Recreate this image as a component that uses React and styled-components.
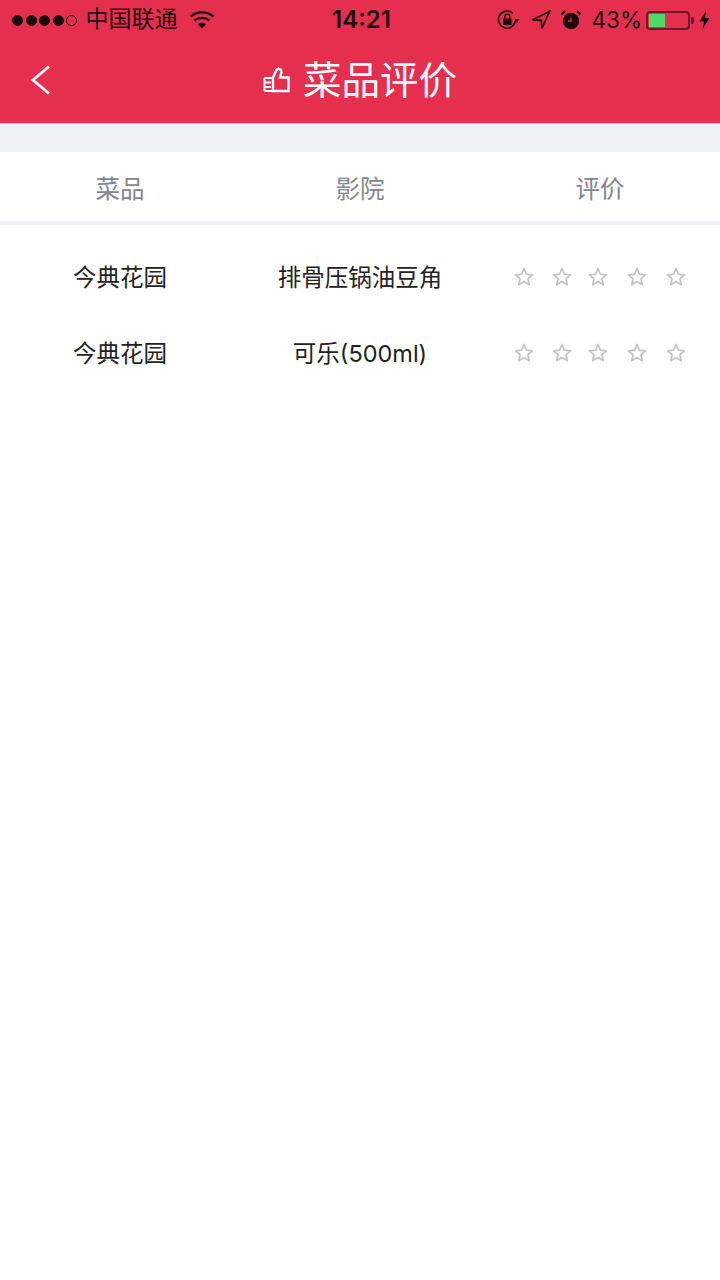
import React from "react";
import styled, { createGlobalStyle } from "styled-components";

const cjk = `"Inter", "Noto Sans CJK SC", "Noto Sans", sans-serif`;

const GlobalStyle = createGlobalStyle`
  html, body {
    margin: 0;
    padding: 0;
    background: #fff;
  }
  body {
    font-family: ${cjk};
  }
`;

const Page = styled.div`
  width: 720px;
  height: 1280px;
  overflow: hidden;
  background: #fff;
`;

const Top = styled.header`
  height: 123px;
  background: #e62f4f;
  border-bottom: 1px solid #c9c4c9;
`;

const StatusBar = styled.div`
  height: 40px;
  display: grid;
  grid-template-columns: 1fr auto 1fr;
  align-items: center;
  color: #1a0a0e;
  padding: 0 10px 0 12px;
`;

const StatusLeft = styled.div`
  display: flex;
  align-items: center;
`;

const StatusRight = styled.div`
  display: flex;
  align-items: center;
  justify-content: flex-end;
`;

const Dot = styled.span`
  width: 11px;
  height: 11px;
  margin-right: 2.5px;
  box-sizing: border-box;
  border-radius: 50%;
  border: 1px solid #1a0a0e;
  background: ${props => (props.$empty ? "transparent" : "#1a0a0e")};
`;

const Carrier = styled.span`
  margin-left: 6px;
  font-size: 23px;
  line-height: 38px;
  height: 40px;
`;

const Clock = styled.span`
  font-size: 24px;
  font-weight: 600;
  line-height: 40px;
  margin-left: 1px;
`;

const Percent = styled.span`
  font-size: 22.5px;
  line-height: 40px;
  margin: 0 4px 0 9px;
`;

const Battery = styled.span`
  width: 44px;
  height: 19px;
  box-sizing: border-box;
  border: 2px solid #6e1a2b;
  border-radius: 4px;
  padding: 1px;
  display: flex;
`;

const BatteryFill = styled.span`
  display: block;
  height: 100%;
  background: #4cd964;
`;

const BatteryCap = styled.span`
  width: 3px;
  height: 7px;
  margin-left: 1px;
  margin-right: 5px;
  background: #6e1a2b;
  border-radius: 0 2px 2px 0;
`;

const StatusIcon = styled.svg`
  display: block;
  margin-left: ${props => props.$gap || 0}px;
`;

const NavBar = styled.nav`
  height: 83px;
  position: relative;
  display: flex;
  align-items: center;
  justify-content: center;
  color: #fff;
`;

const Back = styled.svg`
  position: absolute;
  left: 30px;
  top: 25px;
`;

const Title = styled.h1`
  margin: 0 0 3px;
  display: flex;
  align-items: center;
  font-size: 38.5px;
  line-height: 50px;
  font-weight: 400;
`;

const ThumbIcon = styled.svg`
  margin-right: 13px;
`;

const Band = styled.div`
  height: 28px;
  background: #f0f1f5;
`;

const Row = styled.div`
  display: grid;
  grid-template-columns: repeat(3, 240px);
  align-items: center;
  justify-items: center;
  height: 76px;
`;

const HeadRow = styled(Row)`
  border-bottom: 4px solid #f0f1f5;
  color: #84858f;
  font-size: 24.5px;
  padding-top: 2px;
  height: 67px;
`;

const List = styled.div`
  padding-top: 14px;
  color: #222;
  font-size: 23.5px;
`;

const CellText = styled.span`
  margin-bottom: 2px;
`;

const Stars = styled.div`
  display: flex;
  align-items: center;
`;

const StarIcon = styled.svg`
  display: block;
  margin-left: ${props => props.$gap}px;
`;

const WifiIcon = () => (
  <StatusIcon $gap={11} width="26" height="20" viewBox="0 0 26 20">
    <path d="M1.5 6.5C8 1 18 1 24.5 6.5" fill="none" stroke="#1a0a0e" strokeWidth="2.4" />
    <path d="M5.5 10.5C10 7 16 7 20.5 10.5" fill="none" stroke="#1a0a0e" strokeWidth="2.4" />
    <path d="M9 14.2C11.5 12.4 14.5 12.4 17 14.2L13 18.5Z" fill="#1a0a0e" />
  </StatusIcon>
);

const LockIcon = () => (
  <StatusIcon width="23" height="22" viewBox="0 0 23 22">
    <path d="M18.5 11A8.5 8.5 0 1 1 16 4.5" fill="none" stroke="#1a0a0e" strokeWidth="1.6" />
    <path d="M17.5 10H22.5L20 13.5Z" fill="#1a0a0e" />
    <rect x="6" y="9.5" width="8.5" height="6.5" fill="#1a0a0e" />
    <path d="M7.8 9.5V7.6A2.5 2.5 0 0 1 12.8 7.6V9.5" fill="none" stroke="#1a0a0e" strokeWidth="1.4" />
  </StatusIcon>
);

const LocationIcon = () => (
  <StatusIcon $gap={11} width="20" height="20" viewBox="0 0 20 20">
    <path d="M18.5 1.5L1.5 9.8L10.2 10.2L10.8 18.5Z" fill="none" stroke="#1a0a0e" strokeWidth="1.7" />
  </StatusIcon>
);

const AlarmIcon = () => (
  <StatusIcon $gap={9} width="22" height="22" viewBox="0 0 22 22">
    <circle cx="11" cy="12" r="8.2" fill="#1a0a0e" />
    <path d="M11 8.5V12H8" fill="none" stroke="#e62f4f" strokeWidth="1.4" />
    <path d="M1.5 5.5L5 2.2M20.5 5.5L17 2.2" stroke="#1a0a0e" strokeWidth="2" />
  </StatusIcon>
);

const BoltIcon = () => (
  <StatusIcon width="11" height="18" viewBox="0 0 11 18">
    <path d="M7 0L0.5 10.5H5L3.5 18L10.5 7H6Z" fill="#1a0a0e" />
  </StatusIcon>
);

const Star = ({ gap }) => (
  <StarIcon $gap={gap} width="20" height="20" viewBox="0 0 20 20">
    <path
      d="M10 1.5L12.4 7.2L18.4 7.8L13.9 11.8L15.3 17.8L10 14.6L4.7 17.8L6.1 11.8L1.6 7.8L7.6 7.2Z"
      fill="none"
      stroke="#c4c4c4"
      strokeWidth="1.7"
      strokeLinejoin="round"
    />
  </StarIcon>
);

const starGaps = [0, 18, 16, 19, 19];

const dishes = [
  { cinema: "今典花园", name: "排骨压锅油豆角" },
  { cinema: "今典花园", name: "可乐(500ml)" },
];

const App = () => (
  <Page>
    <GlobalStyle />
    <Top>
      <StatusBar>
        <StatusLeft>
          <Dot />
          <Dot />
          <Dot />
          <Dot />
          <Dot $empty />
          <Carrier>中国联通</Carrier>
          <WifiIcon />
        </StatusLeft>
        <Clock>14:21</Clock>
        <StatusRight>
          <LockIcon />
          <LocationIcon />
          <AlarmIcon />
          <Percent>43%</Percent>
          <Battery>
            <BatteryFill style={{ width: "43%" }} />
          </Battery>
          <BatteryCap />
          <BoltIcon />
        </StatusRight>
      </StatusBar>
      <NavBar>
        <Back width="22" height="30" viewBox="0 0 22 30">
          <path d="M19 1.5L3 15L19 28.5" fill="none" stroke="#fff" strokeWidth="2.8" />
        </Back>
        <Title>
          <ThumbIcon width="27" height="27" viewBox="0 0 27 27">
            <path
              d="M10 10.5L13.5 3L15.5 1.5L18 3L18.5 5.5L17 10.5H25.5V24H10Z"
              fill="none"
              stroke="#fff"
              strokeWidth="2.4"
            />
            <path d="M1.5 11H10M1.5 15.5H8M1.5 20H8M1.5 24H10M1.5 11V24" fill="none" stroke="#fff" strokeWidth="2" />
          </ThumbIcon>
          菜品评价
        </Title>
      </NavBar>
    </Top>
    <Band />
    <HeadRow>
      <span>菜品</span>
      <span>影院</span>
      <span>评价</span>
    </HeadRow>
    <List>
      {dishes.map(dish => (
        <Row key={dish.name}>
          <CellText>{dish.cinema}</CellText>
          <CellText>{dish.name}</CellText>
          <Stars>
            {starGaps.map((gap, i) => (
              <Star key={i} gap={gap} />
            ))}
          </Stars>
        </Row>
      ))}
    </List>
  </Page>
);

export default App;
